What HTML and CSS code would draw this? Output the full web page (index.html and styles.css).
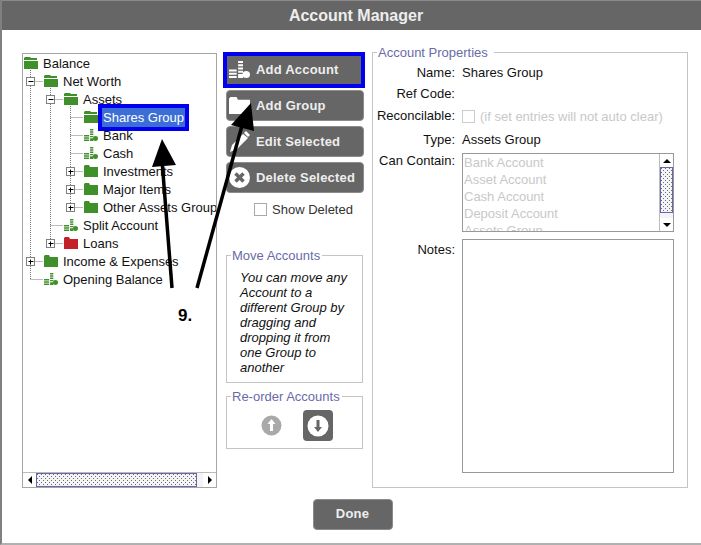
FILE: index.html
```html
<!DOCTYPE html>
<html lang="en">
<head>
  <meta charset="UTF-8">
  <title>Account Manager</title>
  <link rel="stylesheet" href="styles.css">
</head>
<body>
  <svg class="defs" width="0" height="0">
    <symbol id="folder-open" viewBox="0 0 14 12" preserveAspectRatio="none">
      <path d="M1 0h5l1 1h6v2H0V1z"/>
      <path d="M0 4h14v8H0z"/>
    </symbol>
    <symbol id="folder" viewBox="0 0 14 12" preserveAspectRatio="none">
      <path d="M0 1l1-1h4l1 2h8v10H0z"/>
    </symbol>
    <symbol id="coins" viewBox="0 0 15 13" preserveAspectRatio="none">
      <path d="M0 6.500h5.500v1.500H0zM0 9h5.500v1.500H0zM0 11.500h5.500V13H0zM6.500 0h3.500v1.500H6.500zM6.500 2.500h3.500V4H6.500zM6.500 5h3.500v1.500H6.500zM6.500 7.500h3.500V9H6.500zM6.500 10h3.500v3H6.500z"/>
      <circle cx="12.300" cy="10.300" r="2.700"/>
    </symbol>
  </svg>

  <div class="window">
    <h1 class="title">Account Manager</h1>

    <div class="main">
      <div class="tree">
        <div class="tree-rows">
          <div class="row"><svg class="ico green"><use href="#folder-open"/></svg><span class="lbl">Balance</span></div>
          <div class="row d1"><svg class="ico green"><use href="#folder-open"/></svg><span class="lbl">Net Worth</span></div>
          <div class="row d2"><svg class="ico green"><use href="#folder-open"/></svg><span class="lbl">Assets</span></div>
          <div class="row d3"><svg class="ico green"><use href="#folder-open"/></svg><span class="lbl selected">Shares Group</span></div>
          <div class="row d3"><svg class="ico green"><use href="#coins"/></svg><span class="lbl">Bank</span></div>
          <div class="row d3"><svg class="ico green"><use href="#coins"/></svg><span class="lbl">Cash</span></div>
          <div class="row d3"><svg class="ico green"><use href="#folder"/></svg><span class="lbl">Investments</span></div>
          <div class="row d3"><svg class="ico green"><use href="#folder"/></svg><span class="lbl">Major Items</span></div>
          <div class="row d3"><svg class="ico green"><use href="#folder"/></svg><span class="lbl">Other Assets Group</span></div>
          <div class="row d2"><svg class="ico green"><use href="#coins"/></svg><span class="lbl">Split Account</span></div>
          <div class="row d2"><svg class="ico red"><use href="#folder"/></svg><span class="lbl">Loans</span></div>
          <div class="row d1"><svg class="ico green"><use href="#folder"/></svg><span class="lbl">Income &amp; Expenses</span></div>
          <div class="row d1"><svg class="ico green"><use href="#coins"/></svg><span class="lbl">Opening Balance</span></div>
        </div>

        <svg class="tree-lines" width="193" height="420">
          <g transform="translate(-23 -54)">
            <path class="dots" d="M30.500 70V279M30.500 81.500H43M30.500 261.500H43M30.500 279.500H43M50.500 88V243M50.500 99.500H63M50.500 225.500H63M50.500 243.500H63M70.500 106V207M70.500 117.500H83M70.500 135.500H83M70.500 153.500H83M70.500 171.500H83M70.500 189.500H83M70.500 207.500H83"/>
            <g class="box"><rect x="26.500" y="77.500" width="8" height="8"/><path d="M28.500 81.500h5"/></g>
            <g class="box"><rect x="46.500" y="95.500" width="8" height="8"/><path d="M48.500 99.500h5"/></g>
            <g class="box"><rect x="66.500" y="167.500" width="8" height="8"/><path d="M68.500 171.500h5M70.500 169.500v5"/></g>
            <g class="box"><rect x="66.500" y="185.500" width="8" height="8"/><path d="M68.500 189.500h5M70.500 187.500v5"/></g>
            <g class="box"><rect x="66.500" y="203.500" width="8" height="8"/><path d="M68.500 207.500h5M70.500 205.500v5"/></g>
            <g class="box"><rect x="46.500" y="239.500" width="8" height="8"/><path d="M48.500 243.500h5M50.500 241.500v5"/></g>
            <g class="box"><rect x="26.500" y="257.500" width="8" height="8"/><path d="M28.500 261.500h5M30.500 259.500v5"/></g>
          </g>
        </svg>

        <div class="hscroll">
          <span class="sb-btn"><i class="arrow-left"></i></span>
          <span class="hthumb"></span>
          <span class="hrest"></span>
          <span class="sb-btn"><i class="arrow-right"></i></span>
        </div>
      </div>

      <div class="actions">
        <button class="btn btn-marked" type="button">
          <svg class="btn-ico"><use href="#coins"/></svg>Add Account
        </button>
        <button class="btn" type="button">
          <svg class="btn-ico"><use href="#folder"/></svg>Add Group
        </button>
        <button class="btn" type="button">
          <svg class="btn-ico tall" viewBox="0 0 21 21"><path d="M1 21l2-7L14 3l5 4L8 18zM15 2l2-2 4 4-2 2z"/></svg>Edit Selected
        </button>
        <button class="btn" type="button">
          <svg class="btn-ico tall" viewBox="0 0 21 21"><circle cx="10.500" cy="10.500" r="10.500"/><path class="cross" d="M6.500 6.500l8 8M14.500 6.500l-8 8"/></svg>Delete Selected
        </button>
        <label class="show-deleted"><span class="check"></span>Show Deleted</label>

        <fieldset class="group move">
          <legend>Move Accounts</legend>
          <p class="hint">You can move any Account to a different Group by dragging and dropping it from one Group to another</p>
        </fieldset>

        <fieldset class="group reorder">
          <legend>Re-order Accounts</legend>
          <div class="reorder-btns">
            <svg class="up" width="21" height="21" viewBox="0 0 21 21"><circle cx="10.500" cy="10.500" r="10"/><path d="M10.500 4l4 5h-2.500v7h-3V9H6.500z"/></svg>
            <span class="down">
              <svg width="22" height="22" viewBox="0 0 22 22"><circle cx="11" cy="11" r="10.500"/><path d="M9.500 5h3v7H15l-4 5-4-5h2.500z"/></svg>
            </span>
          </div>
        </fieldset>
      </div>

      <fieldset class="group props">
        <legend>Account Properties</legend>
        <div class="form">
          <span class="key">Name:</span><span>Shares Group</span>
          <span class="key">Ref Code:</span><span></span>
          <span class="key">Reconcilable:</span>
          <span class="reconcile"><span class="check faint"></span>(if set entries will not auto clear)</span>
          <span class="key">Type:</span><span>Assets Group</span>
          <span class="key top">Can Contain:</span>
          <div class="listbox">
            <div class="items">
              <div>Bank Account</div>
              <div>Asset Account</div>
              <div>Cash Account</div>
              <div>Deposit Account</div>
              <div>Assets Group</div>
            </div>
            <div class="vscroll">
              <span class="sb-btn"><i class="arrow-up"></i></span>
              <span class="vthumb"></span>
              <span class="vrest"></span>
              <span class="sb-btn"><i class="arrow-down"></i></span>
            </div>
          </div>
          <span class="key top notes-key">Notes:</span>
          <div class="notes"></div>
        </div>
      </fieldset>
    </div>

    <div class="footer">
      <button class="btn done" type="button">Done</button>
    </div>

    <svg class="arrows" width="701" height="545">
      <path d="M172 288L162 160"/>
      <path d="M197 288L243 122"/>
      <polygon points="162,139 152,167 176,165"/>
      <polygon points="251,103 231,125 254,131"/>
    </svg>
    <span class="step">9.</span>
  </div>
</body>
</html>
```

FILE: styles.css
```css
body {
  margin: 0;
  font-family: "Liberation Sans", Arial, sans-serif;
  font-size: 13px;
  color: #111;
  background: #fff;
}
.defs {
  display: block;
}
.window {
  position: relative;
  width: 701px;
  height: 545px;
  box-sizing: border-box;
  border-left: 2px solid #808080;
  border-bottom: 2px solid #b0b0b0;
  overflow: hidden;
}
.title {
  margin: 0 0 0 -2px;
  padding-left: 11px;
  height: 30px;
  line-height: 30px;
  background: #666;
  border-top: 1px solid #8a8a8a;
  box-sizing: border-box;
  text-align: center;
  font-size: 16px;
  font-weight: bold;
  color: #eee;
}
.main {
  display: flex;
  align-items: flex-start;
  padding: 15px 0 0 20px;
}

/* tree */
.tree {
  position: relative;
  width: 195px;
  height: 435px;
  margin-top: 8px;
  box-sizing: border-box;
  border: 1px solid #a6a6a6;
  display: flex;
  flex-direction: column;
  overflow: hidden;
}
.tree-rows {
  flex: 1;
}
.row {
  display: flex;
  align-items: center;
  height: 18px;
  padding-left: 1px;
  white-space: nowrap;
}
.d1 { padding-left: 21px; }
.d2 { padding-left: 41px; }
.d3 { padding-left: 61px; }
.ico {
  width: 14px;
  height: 12px;
  margin-right: 5px;
  flex: none;
}
.green { fill: #3f8f2b; }
.red { fill: #c4202a; }
.lbl {
  position: relative;
  line-height: 15px;
}
.selected {
  margin-left: -1px;
  padding: 2px 1px;
  background: #3b6fd6;
  color: #fff;
  outline: 4px solid #0000ee;
}
.tree-lines {
  position: absolute;
  left: 0;
  top: 0;
}
.dots {
  fill: none;
  stroke: #777;
  stroke-dasharray: 1 1;
}
.box rect {
  fill: #fff;
  stroke: #808080;
}
.box path {
  fill: none;
  stroke: #000;
}

/* scrollbars */
.hscroll {
  display: flex;
  height: 14px;
  border-top: 1px solid #bbb;
  flex: none;
}
.sb-btn {
  flex: none;
  display: flex;
  align-items: center;
  justify-content: center;
  width: 13px;
  height: 13px;
  background: #fff;
}
.hthumb {
  width: 161px;
  box-sizing: border-box;
  border: 1px solid #6666aa;
  background-color: #f6f4ee;
  background-image: radial-gradient(circle at 0.5px 0.5px, #6666aa 0.5px, transparent 0.6px), radial-gradient(circle at 0.5px 0.5px, #6666aa 0.5px, transparent 0.6px);
  background-size: 4px 4px;
  background-position: 0 0, 2px 2px;
}
.hrest {
  flex: 1;
  background: #f4f4f4;
}
.arrow-left, .arrow-right, .arrow-up, .arrow-down {
  width: 0;
  height: 0;
  border: 4px solid transparent;
}
.arrow-left { border-right-color: #000; border-left-width: 0; }
.arrow-right { border-left-color: #000; border-right-width: 0; }
.arrow-up { border-bottom-color: #000; border-top-width: 0; }
.arrow-down { border-top-color: #000; border-bottom-width: 0; }

/* buttons column */
.actions {
  width: 138px;
  margin: 9px 0 0 9px;
  display: flex;
  flex-direction: column;
}
.btn {
  display: flex;
  align-items: center;
  height: 31px;
  margin: 0 0 5px;
  padding: 0 0 0 2px;
  border: 1px solid #8c8c8c;
  border-radius: 4px;
  background: #666;
  color: #eee;
  font: bold 13px "Liberation Sans", Arial, sans-serif;
  letter-spacing: 0.2px;
}
.btn-marked {
  width: 142px;
  height: 36px;
  margin: -2px -1px 2px -3px;
  padding: 0 0 2px 2px;
  border: 4px solid #0000ee;
  border-radius: 0;
}
.btn-ico {
  width: 21px;
  height: 17px;
  margin-right: 6px;
  fill: #fff;
  flex: none;
}
.btn-ico.tall {
  height: 21px;
}
.cross {
  fill: none;
  stroke: #666;
  stroke-width: 3.500;
}
.show-deleted {
  display: flex;
  align-items: center;
  height: 14px;
  margin: 4px 0 0 28px;
  color: #333;
}
.check {
  width: 11px;
  height: 11px;
  margin-right: 5px;
  border: 1px solid #aaa;
  flex: none;
}
.check.faint {
  border-color: #ccc;
}

/* fieldsets */
.group {
  margin: 0;
  padding: 0;
  border: 1px solid #c4c4c4;
  box-sizing: border-box;
}
.group legend {
  margin-left: 4px;
  padding: 0 2px 0 1px;
  color: #6a6aa8;
  line-height: 15px;
}
.move {
  width: 137px;
  height: 135px;
  margin-top: 32px;
}
.hint {
  margin: 0;
  padding: 7px 0 0 13px;
  font-style: italic;
  line-height: 15px;
  width: 112px;
  color: #111;
}
.reorder {
  width: 137px;
  height: 60px;
  margin-top: 6px;
}
.reorder-btns {
  display: flex;
  align-items: center;
  gap: 21px;
  padding: 6px 0 0 34px;
}
.up {
  fill: #a9a9a9;
}
.up path {
  fill: #fff;
}
.down {
  display: flex;
  align-items: center;
  justify-content: center;
  width: 30px;
  height: 31px;
  background: #666;
  border-radius: 4px;
}
.down svg {
  fill: #fff;
}
.down path {
  fill: #666;
}
.props {
  width: 316px;
  height: 443px;
  margin-left: 8px;
}
.props legend {
  padding-right: 6px;
}

/* properties form */
.form {
  display: grid;
  grid-template-columns: 82px 212px;
  grid-template-rows: 21px 21px 22px 26px 87px 234px;
  column-gap: 7px;
  align-items: center;
  padding-top: 2px;
}
.key {
  text-align: right;
}
.top {
  align-self: start;
  padding-top: 1px;
  line-height: 15px;
}
.top.notes-key {
  padding-top: 3px;
}
.reconcile {
  display: flex;
  align-items: center;
  padding-top: 3px;
  color: #c8c8c8;
  white-space: nowrap;
}
.listbox {
  align-self: start;
  display: flex;
  height: 79px;
  margin-top: 1px;
  box-sizing: border-box;
  border: 1px solid #999;
  overflow: hidden;
}
.items {
  flex: 1;
  padding-left: 1px;
  color: #c8c8c8;
  line-height: 17px;
}
.vscroll {
  display: flex;
  flex-direction: column;
  width: 13px;
  border-left: 1px solid #bbb;
}
.vthumb {
  height: 46px;
  box-sizing: border-box;
  border: 1px solid #6666aa;
  background-color: #f6f4ee;
  background-image: radial-gradient(circle at 0.5px 0.5px, #6666aa 0.5px, transparent 0.6px), radial-gradient(circle at 0.5px 0.5px, #6666aa 0.5px, transparent 0.6px);
  background-size: 4px 4px;
  background-position: 0 0, 2px 2px;
}
.vrest {
  flex: 1;
  background: #f4f4f4;
}
.notes {
  align-self: stretch;
  border: 1px solid #999;
  box-sizing: border-box;
  height: 234px;
}

/* footer */
.footer {
  display: flex;
  justify-content: center;
  padding: 11px 0 0 2px;
}
.done {
  width: 80px;
  justify-content: center;
  padding: 0 0 3px;
  margin: 0;
}

/* annotations */
.arrows {
  position: absolute;
  left: -2px;
  top: 0;
  pointer-events: none;
}
.arrows path {
  fill: none;
  stroke: #000;
  stroke-width: 3.500;
}
.arrows polygon {
  fill: #000;
}
.step {
  position: absolute;
  left: 176px;
  top: 306px;
  font-size: 17px;
  font-weight: bold;
  color: #000;
}
```
